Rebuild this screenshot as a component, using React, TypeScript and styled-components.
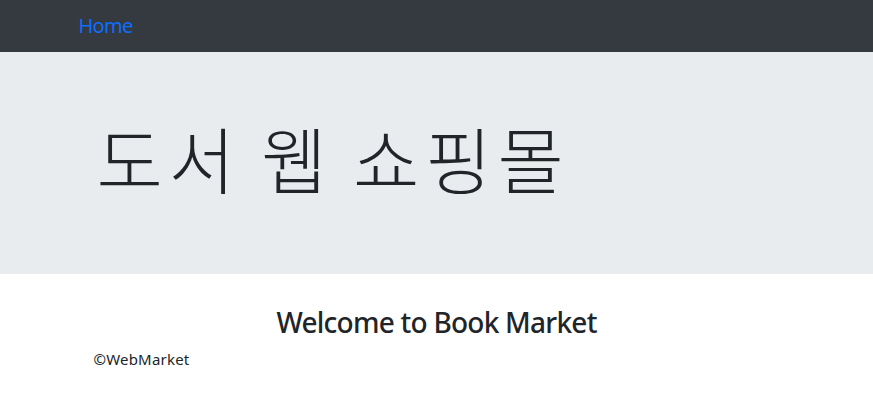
import React from "react";
import styled, { createGlobalStyle } from "styled-components";

const GlobalStyle = createGlobalStyle`
  html, body { margin: 0; padding: 0; background: #fff; }
  body {
    font-family: "Noto Sans", "Open Sans", "Noto Sans CJK KR", sans-serif;
    font-size: 16px;
    line-height: 1.5;
    color: #212529;
  }
  * { box-sizing: border-box; }
`;

const Container = styled.div<{ $pad?: number }>`
  width: 100%;
  max-width: 720px;
  margin: 0 auto;
  padding: 0 ${(p) => p.$pad ?? 15}px;
`;

const NavBar = styled.nav`
  background: #343a40;
  height: 52px;
  display: flex;
  align-items: center;
`;

const NavInner = styled(Container)`
  display: flex;
  align-items: center;
`;

const Brand = styled.a`
  color: #0d6efd;
  font-size: 20px;
  line-height: 30px;
  letter-spacing: -0.7px;
  text-decoration: none;
  padding-left: 2px;
`;

const Jumbotron = styled.header`
  background: #e9ecef;
  padding: 64px 32px;
  margin-bottom: 32px;
`;

const Display = styled.h1`
  margin: 0 0 8px;
  font-family: "Noto Sans CJK KR", sans-serif;
  font-size: 72px;
  font-weight: 300;
  line-height: 1.2;
  letter-spacing: 6px;
  word-spacing: -2px;
  padding-left: 5px;
  position: relative;
  top: -2px;
`;

const Title = styled.h3`
  margin: 0 0 8px;
  text-align: center;
  font-size: 28px;
  font-weight: 500;
  line-height: 1.2;
  letter-spacing: -0.75px;
`;

const Footer = styled.footer``;

const Copy = styled.p`
  margin: 0;
  font-size: 15px;
  letter-spacing: 0.2px;
  padding-left: 2px;
`;

export default function App() {
  return (
    <>
      <GlobalStyle />
      <NavBar>
        <NavInner $pad={0}>
          <Brand href="#">Home</Brand>
        </NavInner>
      </NavBar>
      <Jumbotron>
        <Container>
          <Display>도서 웹 쇼핑몰</Display>
        </Container>
      </Jumbotron>
      <main>
        <Container>
          <Title>Welcome to Book Market</Title>
        </Container>
      </main>
      <Footer>
        <Container>
          <Copy>©WebMarket</Copy>
        </Container>
      </Footer>
    </>
  );
}
